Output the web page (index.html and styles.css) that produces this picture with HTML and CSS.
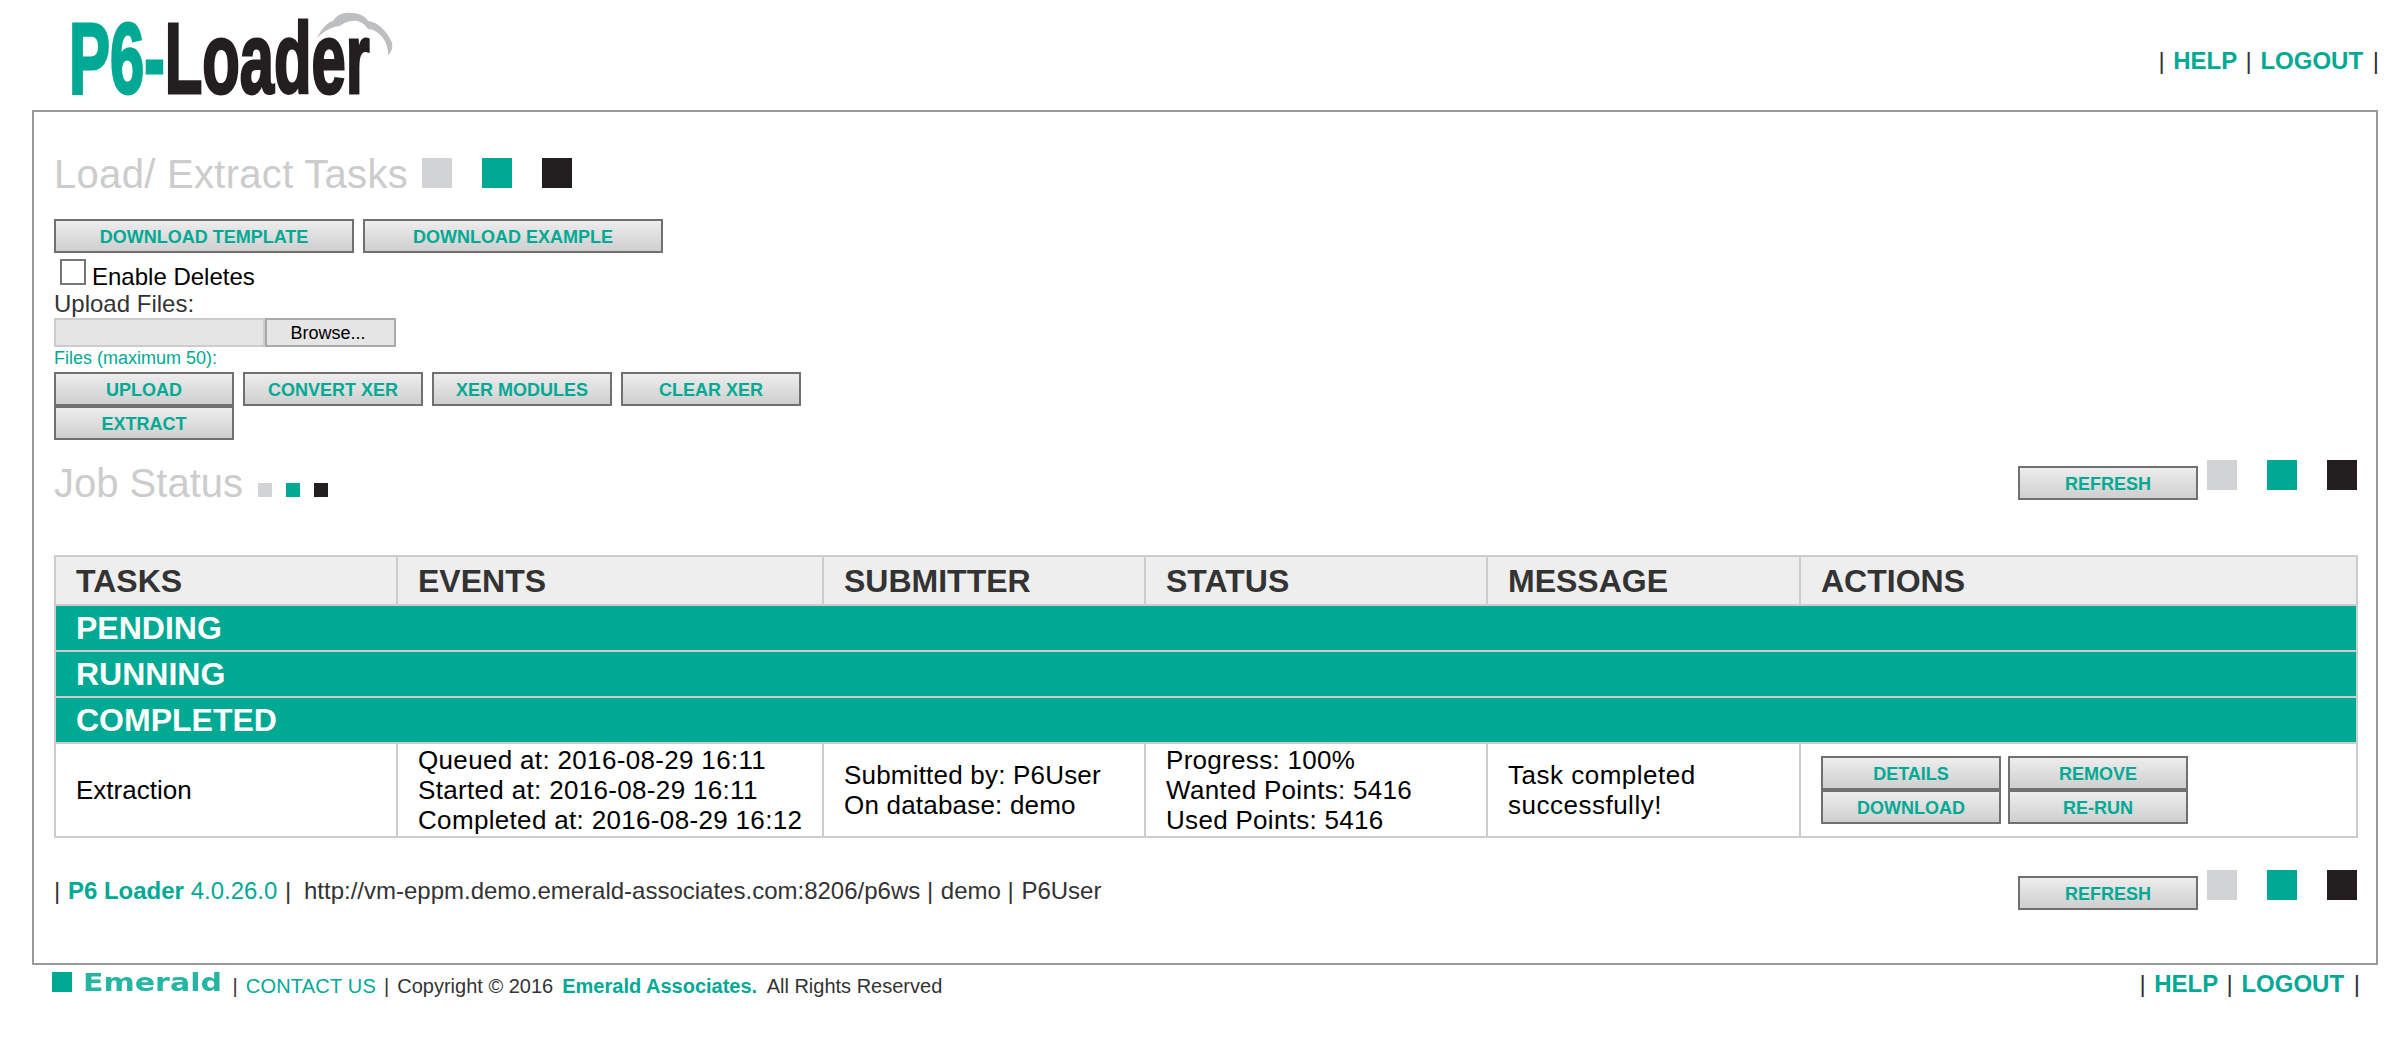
FILE: index.html
```html
<!DOCTYPE html>
<html lang="en">
<head>
<meta charset="utf-8">
<title>P6-Loader</title>
<link rel="stylesheet" href="styles.css">
</head>
<body>
<header class="top">
  <div class="logo">
    <span class="logo-text"><span class="teal">P6-</span>Loader</span>
    <svg class="cloud" width="80" height="50" viewBox="0 0 80 50" aria-hidden="true">
      <path fill="#bcbec0" d="M1 30C5 22 11 14 17 13C21 6 29 4 36 5C44 5 50 9 52 13C62 14 72 24 76 35C77 40 75 45 72 47C72 40 70 33 66 29C62 24 57 21 52 21C48 15 42 12 37 13C32 13 27 15 24 18C18 18 9 22 1 30Z"/>
    </svg>
  </div>
  <nav class="links"><span class="pipe">|</span> <a href="#">HELP</a> <span class="pipe">|</span> <a href="#">LOGOUT</a> <span class="pipe">|</span></nav>
</header>

<main class="panel">
  <div class="title-row">
    <h2 class="title title-load">Load/ Extract Tasks</h2>
    <div class="squares big first"><i class="sq gray"></i><i class="sq green"></i><i class="sq dark"></i></div>
  </div>
  <div class="btn-row top-btns">
    <button class="btn wide">DOWNLOAD TEMPLATE</button>
    <button class="btn wide">DOWNLOAD EXAMPLE</button>
  </div>
  <label class="check-row"><input class="check" type="checkbox"><span class="check-label">Enable Deletes</span></label>
  <div class="upload-label">Upload Files:</div>
  <div class="file-input"><div class="file-name"></div><div class="browse">Browse...</div></div>
  <div class="file-note">Files (maximum 50):</div>
  <div class="btn-row wrap-btns">
    <button class="btn">UPLOAD</button>
    <button class="btn">CONVERT XER</button>
    <button class="btn">XER MODULES</button>
    <button class="btn">CLEAR XER</button>
    <button class="btn">EXTRACT</button>
  </div>

  <div class="status-row">
    <div class="title-row">
      <h2 class="title">Job Status</h2>
      <div class="squares small"><i class="sq gray"></i><i class="sq green"></i><i class="sq dark"></i></div>
    </div>
    <div class="tools">
      <button class="btn refresh">REFRESH</button>
      <div class="squares big"><i class="sq gray"></i><i class="sq green"></i><i class="sq dark"></i></div>
    </div>
  </div>

  <table class="jobs">
    <colgroup>
      <col class="c1"><col class="c2"><col class="c3"><col class="c4"><col class="c5"><col class="c6">
    </colgroup>
    <thead>
      <tr class="head"><th>TASKS</th><th>EVENTS</th><th>SUBMITTER</th><th>STATUS</th><th>MESSAGE</th><th>ACTIONS</th></tr>
    </thead>
    <tbody>
      <tr class="group"><td colspan="6">PENDING</td></tr>
      <tr class="group"><td colspan="6">RUNNING</td></tr>
      <tr class="group"><td colspan="6">COMPLETED</td></tr>
      <tr class="job">
        <td>Extraction</td>
        <td class="events">Queued at: 2016-08-29 16:11<br>Started at: 2016-08-29 16:11<br>Completed at: 2016-08-29 16:12</td>
        <td class="submitter">Submitted by: P6User<br>On database: demo</td>
        <td class="status">Progress: 100%<br>Wanted Points: 5416<br>Used Points: 5416</td>
        <td class="message">Task completed<br>successfully!</td>
        <td>
          <div class="actions">
            <button class="btn">DETAILS</button>
            <button class="btn">REMOVE</button>
            <button class="btn">DOWNLOAD</button>
            <button class="btn">RE-RUN</button>
          </div>
        </td>
      </tr>
    </tbody>
  </table>

  <div class="info-row">
    <div class="info"><span class="sep">|</span> <b class="teal">P6 Loader</b> <span class="teal">4.0.26.0</span> <span class="sep wide-sep">|</span> http://vm-eppm.demo.emerald-associates.com:8206/p6ws <span class="sep">|</span> demo <span class="sep">|</span> P6User</div>
    <div class="tools">
      <button class="btn refresh">REFRESH</button>
      <div class="squares big"><i class="sq gray"></i><i class="sq green"></i><i class="sq dark"></i></div>
    </div>
  </div>
</main>

<footer class="bottom">
  <div class="foot-left">
    <span class="em-mark"></span><span class="em-name">Emerald</span>
    <span class="foot-text"><span class="pipe">|</span> <a class="plain" href="#">CONTACT US</a> <span class="pipe">|</span> Copyright © 2016 <b class="teal company">Emerald Associates.</b> All Rights Reserved</span>
  </div>
  <nav class="links foot-links"><span class="pipe">|</span> <a href="#">HELP</a> <span class="pipe">|</span> <a href="#">LOGOUT</a> <span class="pipe">|</span></nav>
</footer>
</body>
</html>
```
FILE: styles.css
```css
html, body { margin: 0; padding: 0; background: #fff; overflow: hidden; }
body { font-family: "Liberation Sans", Arial, sans-serif; color: #333; height: 1046px; }
.teal { color: #00a994; }

.top { height: 110px; display: flex; justify-content: space-between; align-items: flex-start; }
.logo { position: relative; width: 330px; height: 100px; margin-left: 70px; }
.logo-text { display: block; position: absolute; left: -1px; top: 8px; font-size: 100px; line-height: 100px; font-weight: 700; color: #231f20; -webkit-text-stroke: 3px currentColor; transform: scaleX(.615); transform-origin: left top; white-space: nowrap; }
.cloud { position: absolute; left: 246px; top: 8px; }
.links { font-size: 24px; line-height: 27px; font-weight: 700; margin-top: 47px; margin-right: 15px; white-space: nowrap; }
.links a { color: #00a994; text-decoration: none; }
.pipe { font-weight: 400; color: #333; }
.links .pipe { margin: 0 2px; }
.links .pipe:last-child { margin: 0 0 0 3px; }

.panel { margin: 0 16px 0 32px; border: 2px solid #999; padding: 39px 19px 53px 20px; height: 855px; box-sizing: border-box; }
.title-row { display: flex; align-items: flex-start; }
.title { margin: 0; font-size: 40px; line-height: 46px; font-weight: 400; color: #ccc; }
.title-load { letter-spacing: .3px; }
.squares { display: flex; }
.sq { display: block; background: #d1d3d4; }
.sq.green { background: #00a994; }
.sq.dark { background: #231f20; }
.squares.big { gap: 30px; }
.squares.big .sq { width: 30px; height: 30px; }
.squares.first { margin: 7px 0 0 14px; }
.squares.small { gap: 14px; margin: 23px 0 0 15px; }
.squares.small .sq { width: 14px; height: 14px; }

.btn { box-sizing: border-box; width: 180px; height: 34px; padding: 2px 0 0; border: 2px solid #707070; border-radius: 0; background: linear-gradient(#ededed, #cfcfcf); color: #00a994; font: 700 18px/1 "Liberation Sans", Arial, sans-serif; text-align: center; }
.btn.wide { width: 300px; }
.btn-row { display: flex; column-gap: 9px; }
.top-btns { margin-top: 22px; }
.wrap-btns { flex-wrap: wrap; width: 747px; margin-top: 5px; }

.check-row { display: flex; align-items: flex-start; gap: 6px; margin-top: 6px; padding-left: 6px; }
.check { appearance: none; -webkit-appearance: none; box-sizing: border-box; width: 26px; height: 26px; margin: 0; border: 2px solid #777; background: #fff; }
.check-label { font-size: 24px; line-height: 27px; padding-top: 4px; color: #000; }
.upload-label { font-size: 24px; line-height: 27px; margin-bottom: -1px; }
.file-input { display: flex; width: 342px; height: 29px; margin-top: 2px; }
.file-name { box-sizing: border-box; width: 211px; background: #e5e5e5; border: 2px solid #ccc; }
.browse { box-sizing: border-box; width: 131px; padding-right: 5px; background: #e5e5e5; border: 2px solid #aaa; font-size: 18px; line-height: 26px; text-align: center; color: #000; }
.file-note { margin-top: 2px; font-size: 18px; line-height: 18px; color: #00a994; }

.status-row { display: flex; justify-content: space-between; align-items: flex-start; margin-top: 20px; }
.tools { display: flex; align-items: flex-start; gap: 9px; }
.refresh { margin-top: 6px; }

.jobs { width: 2302px; margin-top: 49px; border-collapse: collapse; table-layout: fixed; }
.jobs .c1 { width: 342px; }
.jobs .c2 { width: 426px; }
.jobs .c3 { width: 322px; }
.jobs .c4 { width: 342px; }
.jobs .c5 { width: 313px; }
.jobs .c6 { width: 557px; }
.jobs th, .jobs td { border: 2px solid #ccc; padding: 0 20px; text-align: left; vertical-align: middle; }
.head { height: 49px; }
.head th { background: #eee; color: #333; font-size: 32px; line-height: 36px; font-weight: 700; }
.group { height: 46px; }
.group td { background: #00a994; color: #fff; font-size: 32px; line-height: 36px; font-weight: 700; }
.job { height: 94px; }
.job td { color: #000; font-size: 26px; line-height: 30px; white-space: nowrap; }
.job .events { letter-spacing: .33px; }
.job .submitter { letter-spacing: .2px; }
.job .status { letter-spacing: .3px; }
.job .message { letter-spacing: .5px; }
.actions { display: flex; flex-wrap: wrap; column-gap: 7px; width: 370px; }

.info-row { display: flex; justify-content: space-between; align-items: flex-start; margin-top: 32px; }
.info { font-size: 24px; line-height: 27px; padding: 7px 0 0; }
.sep { margin-right: 1px; }
.wide-sep { margin: 0 6px 0 1px; }

.bottom { display: flex; justify-content: space-between; align-items: flex-start; }
.foot-left { display: flex; align-items: flex-start; margin-left: 52px; padding-top: 7px; }
.em-mark { display: block; width: 20px; height: 20px; background: #00a994; filter: blur(.4px); }
.em-name { display: block; width: 116px; margin: 0 23px 0 11px; font: 700 25px/22px "DejaVu Sans", sans-serif; color: #00a994; opacity: .85; filter: blur(.5px); transform: scaleX(1.2); transform-origin: left top; }
.foot-text { margin-left: 8px; padding-top: 3px; font-size: 20px; line-height: 23px; }
.foot-text .pipe { margin: 0 2.5px; }
.plain { color: #00a994; text-decoration: none; letter-spacing: .2px; }
.company { margin: 0 5px 0 3.5px; }
.foot-links { margin: 5px 34px 0 0; }
```
